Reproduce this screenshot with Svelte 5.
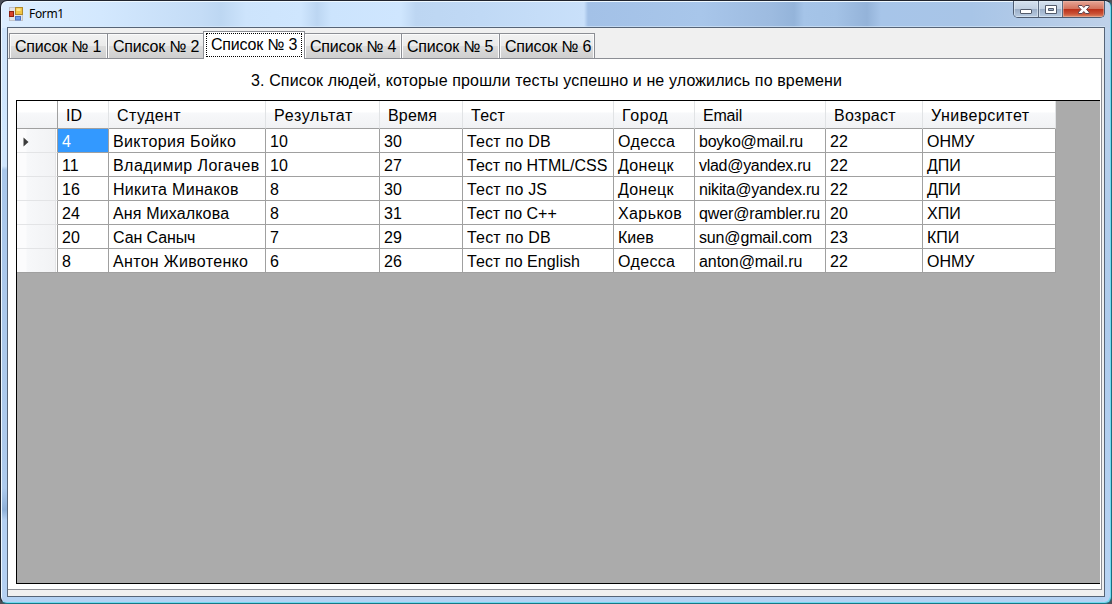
<script>
  const tabs = [
    { n: 1, w: 98 },
    { n: 2, w: 97 },
    { n: 3, w: 102 },
    { n: 4, w: 97 },
    { n: 5, w: 98 },
    { n: 6, w: 96 }
  ];
  const columns = ['ID', 'Студент', 'Результат', 'Время', 'Тест', 'Город', 'Email', 'Возраст', 'Университет'];
  const rows = [
    ['4', 'Виктория Бойко', '10', '30', 'Тест по DB', 'Одесса', 'boyko@mail.ru', '22', 'ОНМУ'],
    ['11', 'Владимир Логачев', '10', '27', 'Тест по HTML/CSS', 'Донецк', 'vlad@yandex.ru', '22', 'ДПИ'],
    ['16', 'Никита Минаков', '8', '30', 'Тест по JS', 'Донецк', 'nikita@yandex.ru', '22', 'ДПИ'],
    ['24', 'Аня Михалкова', '8', '31', 'Тест по C++', 'Харьков', 'qwer@rambler.ru', '20', 'ХПИ'],
    ['20', 'Сан Саныч', '7', '29', 'Тест по DB', 'Киев', 'sun@gmail.com', '23', 'КПИ'],
    ['8', 'Антон Животенко', '6', '26', 'Тест по English', 'Одесса', 'anton@mail.ru', '22', 'ОНМУ']
  ];

  // Per-label tracking in px, for text that is not set at its natural width.
  const tracking = {
    'Студент': 0.45, 'Результат': 0.7, 'Время': 0.2, 'Тест': 0.25, 'Город': 0.6,
    'Email': -0.2, 'Возраст': 0.3, 'Университет': 0.5,
    'Виктория Бойко': 0.37, 'Владимир Логачев': 0.45, 'Никита Минаков': 0.3,
    'Аня Михалкова': 0.15, 'Сан Саныч': -0.1, 'Антон Животенко': 0.33,
    'Тест по DB': 0.2, 'Тест по JS': 0.2, 'Тест по English': 0.07,
    'Одесса': 0.35, 'Донецк': 0.35, 'Харьков': 0.4,
    'boyko@mail.ru': -0.23, 'vlad@yandex.ru': -0.29, 'nikita@yandex.ru': -0.19,
    'qwer@rambler.ru': -0.13, 'sun@gmail.com': -0.15, 'anton@mail.ru': -0.08
  };
  const spacing = (text) => `${tracking[text] ?? 0}px`;
</script>

<div class="desktop">
  <div class="window">
    <header>
      <svg class="logo" width="14" height="14" viewBox="0 0 14 14">
        <rect x="0.5" y="0.5" width="13" height="13" fill="#e4e4e6" stroke="#c2c4ca" />
        <rect x="6.5" y="0.5" width="7" height="7" fill="#f0c445" stroke="#b08a2c" />
        <rect x="7.5" y="1.5" width="4" height="2.5" fill="#ffe68c" />
        <rect x="0.5" y="4.5" width="4" height="5" fill="#d8432c" stroke="#8c2012" />
        <rect x="6.5" y="9.5" width="5" height="3.5" fill="#6d9bea" stroke="#4a72c4" />
      </svg>
      <span class="title">Form1</span>
      <div class="controls">
        <button class="min" aria-label="Minimize">
          <svg width="24" height="16"><rect x="6.5" y="8.5" width="11" height="4" rx="0.5" fill="#fff" stroke="#535b6b" /></svg>
        </button>
        <button class="max" aria-label="Maximize">
          <svg width="23" height="16">
            <path d="M6.5 4.5h11v8h-11zM9.5 7.5v2h5v-2z" fill="#fff" fill-rule="evenodd" stroke="#535b6b" />
          </svg>
        </button>
        <button class="close" aria-label="Close">
          <svg width="42" height="16">
            <path d="M15.5 4.5h3.5l1.8 2 1.8-2h3.5v1.3l-2.6 2.7 2.6 2.7v1.3h-3.5l-1.8-2-1.8 2h-3.5v-1.3l2.6-2.7-2.6-2.7z" fill="#fff" stroke="#5c4550" />
          </svg>
        </button>
      </div>
    </header>
    <main>
      <nav>
        {#each tabs as tab}
          <div class="tab" class:active={tab.n === 3} style:width="{tab.w}px"><span>Список № {tab.n}</span></div>
        {/each}
      </nav>
      <section>
        <h1>3. Список людей, которые прошли тесты успешно и не уложились по времени</h1>
        <div class="grid">
          <div class="row head">
            <div class="stub"></div>
            {#each columns as name}<div class="cell" style:letter-spacing={spacing(name)}>{name}</div>{/each}
          </div>
          {#each rows as row, i}
            <div class="row">
              <div class="stub">
                {#if i === 0}<svg width="6" height="10"><path d="M0.5 0.5v9l5-4.5z" fill="#3c3c3c" /></svg>{/if}
              </div>
              {#each row as value, j}
                <div class="cell" class:selected={i === 0 && j === 0} style:letter-spacing={spacing(value)}>{value}</div>
              {/each}
            </div>
          {/each}
        </div>
      </section>
    </main>
  </div>
</div>

<style>
  .desktop {
    width: 1112px;
    height: 604px;
    background: #4c5058;
    overflow: hidden;
    font: 16px/20px 'Liberation Sans', Arial, sans-serif;
    color: #000;
  }
  .window {
    box-sizing: border-box;
    width: 1112px;
    height: 604px;
    padding: 0 6px 5px 5px;
    border: 1px solid #20242e;
    border-bottom-color: #187786;
    border-right-color: #176f80;
    border-radius: 7px;
    box-shadow: inset 1px 1px #eef8ff, inset -1px -1px #72d9ef;
    background:
      linear-gradient(#cfe5fc, #d0e6fd 138px, #a9c7eb 142px, #aecbed 460px, #8fb1d9 482px, #b4d0f2 492px) 0 27px / 7px 100% no-repeat,
      linear-gradient(#bed3ec, #b2cdec 180px, #aecbed 300px, #b9d5f5) 100% 27px / 8px 100% no-repeat,
      linear-gradient(#b4d2f3, #b4d2f3) 0 100% / 100% 8px no-repeat,
      linear-gradient(64deg, transparent 0 790px, transparent) no-repeat,
      linear-gradient(90deg, #ddeeff, #d3e8fe 100px, #c4dcf6 200px, #bdd7f2 220px, #cde4fc 245px, #cfe6fe 300px, #bcd6f2 316px, #cce4fd 330px, #cfe6fe 400px, #bdd6f2 415px, #c0d9f5 480px, #c9e0fa 583px, #a3c1e7 587px, #a8c6ea 700px, #9dbbe0 770px, #94b4da 793px, #a5c4e8 803px, #a3c2e6 835px, #94b3d9 866px, #a7c5e9 880px, #a8c5e7 970px, #bfd1e9 1112px);
  }
  header {
    display: flex;
    height: 26px;
    box-sizing: border-box;
    padding-left: 3px;
    box-shadow: 0 -1px 0 #eef8ff00, inset 0 -1px #dcebfa90;
  }
  .logo {
    margin-top: 6px;
  }
  .title {
    margin: 4px 0 0 6px;
    font: 12px/17px 'Noto Sans', 'Open Sans', sans-serif;
    letter-spacing: -0.35px;
  }
  .controls {
    display: flex;
    box-sizing: border-box;
    width: 92px;
    height: 17px;
    margin-left: auto;
    border: 1px solid #4d5b70;
    border-top: 0;
    border-radius: 0 0 5px 5px;
    overflow: hidden;
  }
  button {
    display: block;
    box-sizing: border-box;
    flex: none;
    padding: 0;
    border: 0;
    height: 16px;
    background: linear-gradient(#d5e1ef, #c3d1e2 47%, #9aadc6 50%, #b9cce2);
    box-shadow: inset 0 0 0 1px #e4edf6a0;
  }
  .min {
    width: 25px;
    border-right: 1px solid #5c6a80;
  }
  .max {
    width: 24px;
    border-right: 1px solid #5c6a80;
  }
  .close {
    width: 41px;
    background: linear-gradient(#e6a596, #d4745f 47%, #b92e18 50%, #ca5237 80%, #dd8b68);
    box-shadow: inset 0 0 0 1px #f0c0b080;
  }
  button svg {
    display: block;
  }
  main {
    box-sizing: border-box;
    width: 1098px;
    height: 570px;
    margin-left: 1px;
    border: 1px solid #566477;
    background: #f0f0f0;
  }
  nav {
    display: flex;
    align-items: flex-end;
    height: 31px;
    padding-left: 1px;
    box-sizing: border-box;
  }
  .tab {
    box-sizing: border-box;
    flex: none;
    height: 26px;
    padding: 3px 0 0 5px;
    border: 1px solid #8c8e94;
    border-right-width: 0;
    background: linear-gradient(#f2f2f2, #ebebeb 48%, #dddddd 50%, #cfcfcf);
    box-shadow: inset 1px 1px #fbfbfb, inset -1px 0 #fbfbfb;
    letter-spacing: -0.2px;
    white-space: nowrap;
  }
  .tab:last-child {
    border-right-width: 1px;
  }
  .tab.active {
    height: 28px;
    margin: 0 -1px;
    padding: 1px 2px 2px;
    border-width: 1px 1px 0;
    background: #fff;
    z-index: 1;
    box-shadow: none;
  }
  .active span {
    display: block;
    box-sizing: border-box;
    height: 24px;
    padding: 1px 0 0 4px;
    border: 1px dotted #000;
  }
  section {
    box-sizing: border-box;
    width: 1094px;
    height: 532px;
    margin-top: -1px;
    padding-left: 8px;
    border: 1px solid #8c8e94;
    border-left: 0;
    background: #fff;
  }
  h1 {
    width: 1060px;
    height: 41px;
    box-sizing: border-box;
    margin: 0;
    padding: 12px 0 0 235px;
    font-size: 16px;
    font-weight: 400;
    line-height: 20px;
    letter-spacing: 0.13px;
    white-space: nowrap;
  }
  .grid {
    box-sizing: border-box;
    width: 1084px;
    height: 484px;
    border: 1px solid #000;
    border-right: 0;
    background: #ababab;
  }
  .row {
    display: grid;
    grid-template-columns: 41px 51px 157px 114px 83px 151px 81px 131px 97px 133px;
    width: 1039px;
    height: 24px;
  }
  .cell, .stub {
    box-sizing: border-box;
    border-right: 1px solid #a0a0a0;
    border-bottom: 1px solid #a0a0a0;
    background: #fff;
  }
  .cell {
    padding: 3px 0 0 4px;
    white-space: nowrap;
  }
  .stub {
    padding: 8px 0 0 6px;
    border-bottom-color: #e3e4e6;
    background: linear-gradient(90deg, #fcfcfd 9px, #f7f8fa 10px, #f1f2f4);
    box-shadow: inset -1px 0 #fff, inset -2px 0 #e3e4e6;
  }
  .stub svg {
    display: block;
  }
  .head {
    height: 28px;
  }
  .head .cell {
    padding: 5px 0 0 8px;
    border-right-color: #e1e3e5;
    background: linear-gradient(#fff 40%, #f7f8fa 45%, #f1f2f4);
  }
  .head .stub {
    border-bottom-color: #a0a0a0;
    background: linear-gradient(#fff 40%, #f7f8fa 45%, #f1f2f4);
    box-shadow: none;
  }
  .row:last-child .stub {
    border-bottom-color: #a0a0a0;
  }
  .cell.selected {
    background: #3399ff;
    color: #fff;
  }
</style>
